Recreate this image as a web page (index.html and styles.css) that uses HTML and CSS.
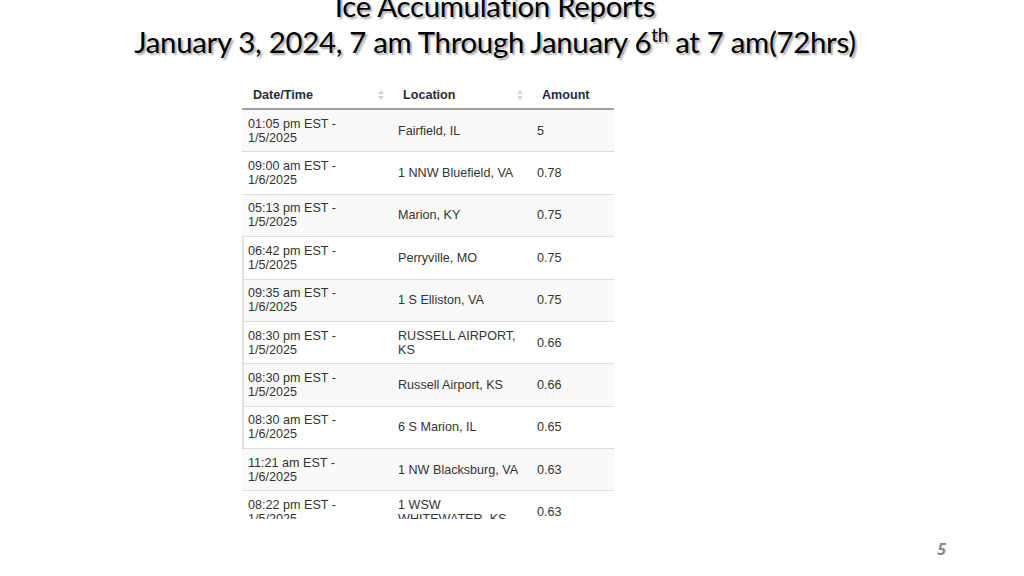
FILE: index.html
```html
<!DOCTYPE html>
<html>
<head>
<meta charset="utf-8">
<link rel="stylesheet" href="styles.css">
</head>
<body>
<div class="slide">
  <h1 class="title">
    <span class="line">Ice Accumulation Reports</span>
    <span class="line">January 3, 2024, 7 am Through January 6<sup>th</sup> at 7 am(72hrs)</span>
  </h1>
  <div class="table-wrap">
    <table class="reports">
      <colgroup>
        <col class="c1"><col class="c2"><col class="c3">
      </colgroup>
      <thead>
        <tr>
          <th><div class="th-in"><span>Date/Time</span><svg class="sort" width="6" height="10" viewBox="0 0 6 10"><path d="M3 0L6 4H0Z M3 10L6 6H0Z" fill="#d4d4d4"/></svg></div></th>
          <th><div class="th-in"><span>Location</span><svg class="sort" width="6" height="10" viewBox="0 0 6 10"><path d="M3 0L6 4H0Z M3 10L6 6H0Z" fill="#d4d4d4"/></svg></div></th>
          <th><div class="th-in"><span>Amount</span></div></th>
        </tr>
      </thead>
      <tbody>
        <tr><td>01:05 pm EST -<br>1/5/2025</td><td>Fairfield, IL</td><td>5</td></tr>
        <tr><td>09:00 am EST -<br>1/6/2025</td><td>1 NNW Bluefield, VA</td><td>0.78</td></tr>
        <tr><td>05:13 pm EST -<br>1/5/2025</td><td>Marion, KY</td><td>0.75</td></tr>
        <tr class="edge"><td>06:42 pm EST -<br>1/5/2025</td><td>Perryville, MO</td><td>0.75</td></tr>
        <tr class="edge"><td>09:35 am EST -<br>1/6/2025</td><td>1 S Elliston, VA</td><td>0.75</td></tr>
        <tr class="edge"><td>08:30 pm EST -<br>1/5/2025</td><td>RUSSELL AIRPORT,<br>KS</td><td>0.66</td></tr>
        <tr class="edge"><td>08:30 pm EST -<br>1/5/2025</td><td>Russell Airport, KS</td><td>0.66</td></tr>
        <tr class="edge"><td>08:30 am EST -<br>1/6/2025</td><td>6 S Marion, IL</td><td>0.65</td></tr>
        <tr><td>11:21 am EST -<br>1/6/2025</td><td>1 NW Blacksburg, VA</td><td>0.63</td></tr>
        <tr><td>08:22 pm EST -<br>1/5/2025</td><td>1 WSW<br>WHITEWATER, KS</td><td>0.63</td></tr>
      </tbody>
    </table>
  </div>
  <div class="footer"><span class="page-num">5</span></div>
</div>
</body>
</html>
```

FILE: styles.css
```css
html, body {
  margin: 0;
  padding: 0;
  background: #ffffff;
}

.slide {
  width: 1024px;
  height: 576px;
  overflow: hidden;
  display: flex;
  flex-direction: column;
  background: #ffffff;
}

.title {
  margin: -12px 34px 0 0;
  font-family: Lato, "Open Sans", sans-serif;
  font-weight: 400;
  font-size: 29.4px;
  line-height: 36px;
  color: #000000;
  text-align: center;
  text-shadow: 2px 2px 2px rgba(0, 0, 0, 0.35);
  letter-spacing: -0.3px;
}

.title .line {
  display: block;
}

.title sup {
  font-size: 19px;
  line-height: 0;
  vertical-align: 11px;
}

.table-wrap {
  margin: 21px 0 0 242px;
  width: 372px;
  height: 438px;
  overflow: hidden;
  flex: none;
}

.reports {
  width: 372px;
  border-collapse: collapse;
  table-layout: fixed;
  font-family: "Liberation Sans", Arial, sans-serif;
  font-size: 12.6px;
  line-height: 14px;
  color: #333333;
}

.reports col.c1 { width: 150px; }
.reports col.c2 { width: 139px; }
.reports col.c3 { width: 83px; }

.reports th {
  height: 27px;
  padding: 0 8px 0 11px;
  border-bottom: 2px solid #9e9e9e;
  font-weight: bold;
  font-size: 12.6px;
  text-align: left;
  vertical-align: middle;
  color: #2b2b36;
}

.th-in {
  display: flex;
  align-items: center;
  justify-content: space-between;
}

.reports td {
  padding: 6.7px 6px 6.7px 6px;
  height: 28px;
  border-top: 1px solid #dddddd;
  vertical-align: middle;
}

.reports tbody tr:first-child td {
  border-top: none;
}

.reports tbody tr:nth-child(odd) td {
  background: #f9f9f9;
}

.reports tr.edge td:first-child {
  box-shadow: inset 2px 0 0 #e2e2e2;
}

.footer {
  margin-top: auto;
  display: flex;
  justify-content: flex-end;
  padding: 0 78px 16px 0;
}

.page-num {
  font-family: "Open Sans", "Liberation Sans", sans-serif;
  font-weight: bold;
  font-style: italic;
  font-size: 16px;
  color: #8a8a8a;
}
```
